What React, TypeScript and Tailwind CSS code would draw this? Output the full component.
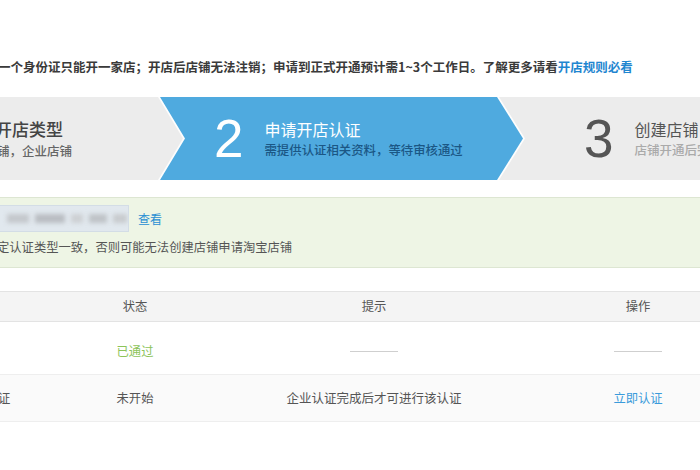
const cjk = { fontFamily: '"Noto Sans CJK SC", "Noto Sans", sans-serif' }
const latin = { fontFamily: '"Liberation Sans", Arial, sans-serif' }

const blue = 'polygon(2px 0, 339px 0, 365px 50%, 339px 100%, 2px 100%, 27px 50%)'
const outline = 'polygon(0 0, 341px 0, 367px 50%, 341px 100%, 0 100%, 25px 50%)'

function StepBar() {
  return (
    <div className="flex h-[83px] bg-[#ececec]">
      {/* step 1, cut off on the left */}
      <div className="w-[158px] shrink-0 overflow-hidden flex flex-col justify-center">
        <div className="-ml-[5px] text-[17px] leading-[22px] font-medium text-[#444] whitespace-nowrap">开店类型</div>
        <div className="-ml-[3px] mt-[2px] text-[12.5px] leading-[18px] font-medium text-[#666] whitespace-nowrap">铺，企业店铺</div>
      </div>

      {/* step 2, active chevron */}
      <div className="relative w-[367px] shrink-0">
        <div className="absolute inset-0 bg-white/90" style={{ clipPath: outline }} />
        <div className="absolute inset-0 bg-[#4faadf]" style={{ clipPath: blue }} />
        <div className="relative flex h-full items-center pl-[56px]">
          <span className="text-[53px] leading-none text-white" style={latin}>2</span>
          <div className="ml-[21px] flex flex-col">
            <span className="text-[16px] leading-[22px] text-white">申请开店认证</span>
            <span className="mt-[1px] text-[12.4px] leading-[18px] font-medium text-[#1b5785] whitespace-nowrap">需提供认证相关资料，等待审核通过</span>
          </div>
        </div>
      </div>

      {/* step 3 */}
      <div className="flex flex-1 items-center overflow-hidden pl-[59px]">
        <span className="text-[53px] leading-none text-[#555]" style={latin}>3</span>
        <div className="ml-[21px] flex flex-col whitespace-nowrap">
          <span className="text-[16px] leading-[22px] text-[#555]">创建店铺</span>
          <span className="mt-[1px] text-[12.5px] leading-[18px] font-medium text-[#aaa]">店铺开通后完成</span>
        </div>
      </div>
    </div>
  )
}

function Notice() {
  return (
    <div className="mt-[17px] h-[71px] border-y border-[#dde6d2] bg-[#eef5e5] flex flex-col pt-[7px]">
      <div className="flex items-center h-[27px]">
        <div className="relative w-[131px] h-[27px] -ml-[2px] border border-[#d3dde6] bg-[#e1e8ee] overflow-hidden">
          <div className="flex items-center gap-[6px] h-full pl-[8px] blur-[2px]">
            <span className="w-[22px] h-[9px] bg-[#c4c8cc]" />
            <span className="w-[30px] h-[9px] bg-[#b9bdc2]" />
            <span className="w-[12px] h-[9px] bg-[#cdd0d3]" />
            <span className="w-[18px] h-[9px] bg-[#bfc3c7]" />
            <span className="w-[14px] h-[9px] bg-[#c8cbce]" />
          </div>
        </div>
        <span className="ml-[9px] text-[12px] text-[#2a8fd3]">查看</span>
      </div>
      <div className="mt-[6px] -ml-[3px] text-[12.3px] leading-[18px] text-[#555] whitespace-nowrap">定认证类型一致，否则可能无法创建店铺申请淘宝店铺</div>
    </div>
  )
}

function Dash() {
  return <span className="block w-[48px] h-px bg-[#cfcfcf]" />
}

function Table() {
  const cols = 'grid grid-cols-[90px_90px_388px_132px] items-center'
  return (
    <div className="mt-[23px] text-[12.3px] text-[#555]">
      <div className={`${cols} h-[31px] bg-[#f4f4f4] border-y border-[#e3e3e3]`}>
        <span />
        <span className="text-center">状态</span>
        <span className="text-center">提示</span>
        <span className="text-center pl-[8px]">操作</span>
      </div>
      <div className={`${cols} h-[53px] pt-[6px] border-b border-[#eeeeee]`}>
        <span />
        <span className="text-center text-[#8dc45a]">已通过</span>
        <span className="flex justify-center"><Dash /></span>
        <span className="flex justify-center pl-[8px]"><Dash /></span>
      </div>
      <div className={`${cols} h-[47px] bg-[#fafafa] border-b border-[#eeeeee]`}>
        <span className="-ml-[2px]">证</span>
        <span className="text-center">未开始</span>
        <span className="text-center text-[12.5px]">企业认证完成后才可进行该认证</span>
        <span className="text-center pl-[8px] text-[#3a9bdb]">立即认证</span>
      </div>
    </div>
  )
}

export default function App() {
  return (
    <div className="w-[700px] h-[470px] overflow-hidden bg-white" style={cjk}>
      <div className="pt-[57px] h-[97px]">
        <p className="-ml-[2px] text-[12.5px] leading-[20px] font-bold text-[#3a3a3a] whitespace-nowrap">
          一个身份证只能开一家店；开店后店铺无法注销；申请到正式开通预计需1~3个工作日。了解更多请看
          <span className="text-[#1f86d0]">开店规则必看</span>
        </p>
      </div>
      <StepBar />
      <Notice />
      <Table />
    </div>
  )
}
